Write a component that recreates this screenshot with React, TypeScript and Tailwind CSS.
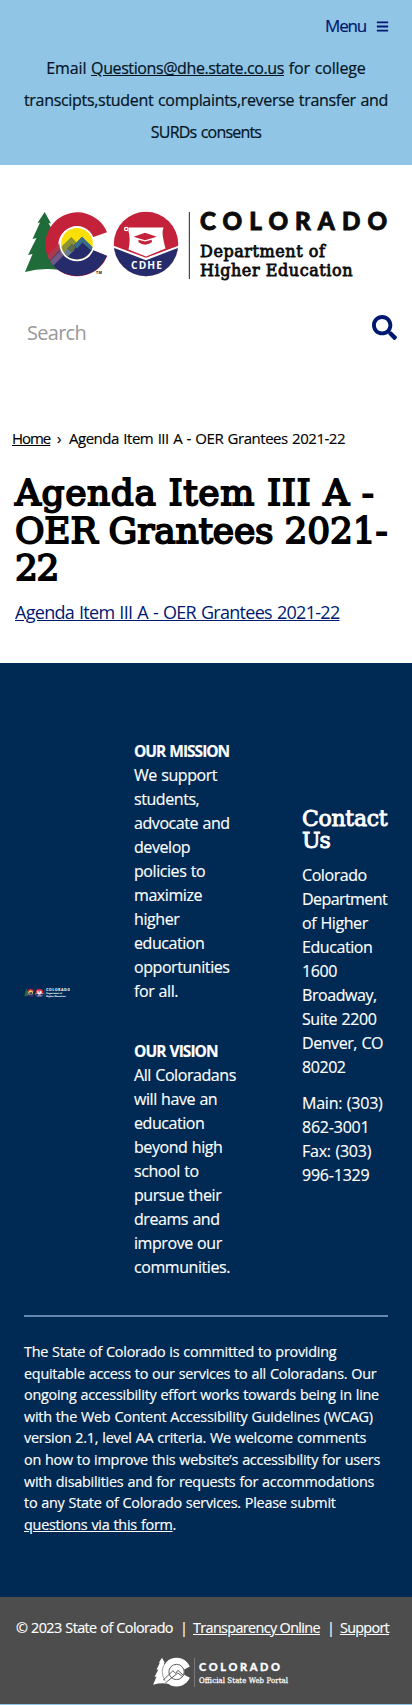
import { FaBars, FaSearch } from "react-icons/fa";

const TREE =
  "M44.7 212L51 223.5L48.5 223L56 237L52.5 236.5L60 270Q42 267 25 272L32.5 254L28 255L36.5 238L32.5 239L40 222.5L37.5 223Z";
const BIG_C =
  "M107 232.2A32 32 0 1 0 107.2 256L92.5 250A17.5 17.5 0 1 1 92 237.6Z";

function HigherEdLogo({ light = false, className }: { light?: boolean; className: string }) {
  const ink = light ? "#ffffff" : "#0b0b0b";
  return (
    <svg viewBox="24 210 364 72" className={className} role="img" aria-label="Colorado Department of Higher Education">
      <defs>
        <clipPath id="cdhe-c">
          <circle cx="77" cy="244" r="32" />
        </clipPath>
        <clipPath id="cdhe-o">
          <circle cx="146" cy="244" r="32.2" />
        </clipPath>
        <clipPath id="cdhe-sun">
          <circle cx="77" cy="243.7" r="15.8" />
        </clipPath>
      </defs>
      <path d={TREE} fill="#1f6b3a" />
      <path d={BIG_C} fill="#c4213a" />
      <g clipPath="url(#cdhe-c)">
        <path d="M46.5 263L64 245.5L77 261L92.5 250L108 256.2V277H58Z" fill="#252b6b" />
        <path d="M46 257L60 243L62 248L49.5 261Z" fill="#a8394f" />
        <path d="M49 262L63.5 247.5L66 253L53 266Z" fill="#6f5a86" />
      </g>
      <circle cx="77" cy="243.7" r="17.6" fill="#ffffff" />
      <circle cx="77" cy="243.7" r="15.8" fill="#fbdf08" />
      <g clipPath="url(#cdhe-sun)">
        <path d="M58 250L71.3 237L80 246L70 262H58Z" fill="#8e9233" />
        <path d="M58 262L82 237L96 251V264H58Z" fill="#252b6b" />
        <path d="M74 245L82 236.8L96 250.5V255L82.5 242.5L77 248.5Z" fill="#3a6f8c" />
        <path d="M60 256L70 246L74.5 250L64 260Z" fill="#6c7d93" />
        <path d="M67 248.5L72 243.5L76 247.5L71.5 252.5Z" fill="#5a6d4d" />
      </g>
      {!light && (
        <text x="96" y="274" fill={ink} className="font-['Open_Sans',sans-serif] font-bold" fontSize="3.6" textLength="6">
          TM
        </text>
      )}

      <circle cx="146" cy="244" r="32.2" fill="#c4213a" />
      <g clipPath="url(#cdhe-o)">
        <path d="M113 245.5L146 257.8L179 245.5V278H113Z" fill="#ffffff" />
        <path d="M113 247.5L146 260.2L179 247.5V278H113Z" fill="#252b6b" />
      </g>
      <path
        d="M128.5 227.5H163.5C161.5 233 163 239 165.5 248.5L146 256.5L128.5 249.5C130 243 130 236 128.5 231.5Z"
        fill="#ffffff"
      />
      <circle cx="126.2" cy="229" r="1.7" fill="none" stroke="#ffffff" strokeWidth="1.3" />
      <path d="M133.5 236.8L145 232.8L156.8 236.8L145 240.2Z" fill="#c4213a" />
      <path d="M138.5 239.7L145 241.4L151.8 239.7V242.3Q145 247 138.5 242.3Z" fill="#c4213a" />
      <text
        x="131"
        y="269"
        fill="#ffffff"
        className="font-['Open_Sans',sans-serif] font-bold"
        fontSize="10.2"
        textLength="31"
      >
        CDHE
      </text>

      <path d="M189.4 212V279" stroke={light ? "#ffffff" : "#4a4a4a"} strokeWidth="1.2" />
      <text
        x="200"
        y="230"
        fill={ink}
        stroke={ink}
        strokeWidth=".9"
        className="font-['Lato',sans-serif] font-black"
        fontSize="24.2"
        textLength="187"
      >
        COLORADO
      </text>
      <g
        fill={ink}
        stroke={ink}
        strokeWidth=".8"
        className="font-['DejaVu_Serif',serif]"
        fontSize="16"
      >
        <text x="200" y="256.8" textLength="125">
          Department of
        </text>
        <text x="200" y="275.8" textLength="152.5">
          Higher Education
        </text>
      </g>
    </svg>
  );
}

function StatePortalLogo() {
  return (
    <svg viewBox="152 1656 138 34" className="ml-[152px] block h-[34px] w-[138px]" role="img" aria-label="Colorado Official State Web Portal">
      <g transform="translate(141.9 1562.3) scale(.45)">
        <path d={TREE} fill="#ffffff" />
        <circle cx="77" cy="244" r="32" fill="#ffffff" />
        <path d="M94 238L110 230V258L94 250Z" fill="#4d4d4d" />
        <path d="M53 222Q38 241 52 264" fill="none" stroke="#4d4d4d" strokeWidth="1.2" />
        <circle cx="77" cy="243.7" r="17" fill="#ffffff" stroke="#4d4d4d" strokeWidth="2" />
        <path d="M47 262L69 241L75 247L80 240L92 251M52 268L80 246L90 254" fill="none" stroke="#4d4d4d" strokeWidth="2" />
      </g>
      <path d="M194.5 1658V1687" stroke="#7a7a7a" strokeWidth="1" />
      <text
        x="199"
        y="1671"
        fill="#ffffff"
        stroke="#ffffff"
        strokeWidth=".3"
        className="font-['Lato',sans-serif] font-black"
        fontSize="11"
        textLength="81"
      >
        COLORADO
      </text>
      <text
        x="199"
        y="1683"
        fill="#ffffff"
        stroke="#ffffff"
        strokeWidth=".25"
        className="font-['DejaVu_Serif',serif] font-stretch-condensed"
        fontSize="7.7"
        textLength="89"
      >
        Official State Web Portal
      </text>
    </svg>
  );
}

export default function App() {
  return (
    <div className="flex min-h-[1705px] w-[412px] flex-col bg-white font-['Open_Sans',sans-serif] text-base text-black">
      <header className="h-[165px] bg-[#90c5e6]">
        <div className="flex h-[52px] items-center justify-end pr-[23px] text-[#001970]">
          <a className="text-[17px] tracking-[-1.2px] [-webkit-text-stroke:0.2px]">Menu</a>
          <FaBars className="ml-[10px] size-[13px]" />
        </div>
        <p className="text-center leading-8 text-[#04141f] [-webkit-text-stroke:0.2px]">
          <span className="tracking-[-0.15px] [word-spacing:0.8px]">
            Email <a className="tracking-[-0.4px] underline">Questions@dhe.state.co.us</a> for college
          </span>
          <br />
          <span className="tracking-[-0.31px] [word-spacing:0.8px]">
            transcipts,student complaints,reverse transfer and
          </span>
          <br />
          <span className="tracking-[-0.8px] [word-spacing:1px]">SURDs consents</span>
        </p>
      </header>

      <div className="pt-[45px]">
        <HigherEdLogo className="ml-6 block h-[72px] w-[364px] overflow-visible" />
      </div>

      <form className="mt-[33px] flex h-[25px] items-start justify-between pr-[15px] pl-[27px]">
        <span className="pt-[4px] text-xl tracking-[-0.72px] text-[#999]">Search</span>
        <FaSearch className="size-[25px] text-[#001970]" />
      </form>

      <nav className="mt-[87px] flex pl-3 text-[15px] leading-[22px] [-webkit-text-stroke:0.15px]">
        <a className="w-[39px] tracking-[-1.05px] underline">Home</a>
        <span className="w-[18px] pl-[6px]">›</span>
        <span className="tracking-[-0.48px] [word-spacing:1px]">Agenda Item III A - OER Grantees 2021-22</span>
      </nav>

      <main className="mt-[25px] px-[15px]">
        <h1 className="font-['DejaVu_Serif',serif] text-[36px] leading-[37.6px] [-webkit-text-stroke:1.8px_black]">
          <span className="tracking-[0.57px]">Agenda Item III A - </span>
          <br />
          <span className="tracking-[-0.18px]">OER Grantees 2021-</span>
          <br />
          <span className="tracking-[-1.4px]">22</span>
        </h1>
        <p className="mt-[12px] text-lg leading-[27px] tracking-[-0.71px] text-[#001970] [word-spacing:1px]">
          <a className="underline">Agenda Item III A - OER Grantees 2021-22</a>
        </p>
      </main>

      <footer className="mt-auto">
        <section className="h-[934px] bg-[#002a54] px-6 pt-[76px] text-white [-webkit-text-stroke:0.15px]">
          <div className="flex h-[540px] items-start">
            <div className="flex h-[508px] w-[110px] items-center">
              <HigherEdLogo light className="h-[10px] w-[46px]" />
            </div>
            <div className="w-[168px] leading-6 tracking-[-0.43px] [word-spacing:0.6px]">
              <p>
                <strong className="text-[15.5px] leading-[23px] tracking-[-1px] [word-spacing:1px]">OUR MISSION</strong>
                <br />
                We support
                <br />
                students,
                <br />
                advocate and
                <br />
                develop
                <br />
                policies to
                <br />
                maximize
                <br />
                higher
                <br />
                education
                <br />
                opportunities
                <br />
                for all.
              </p>
              <p className="mt-9">
                <strong className="text-[15.5px] leading-[23px] tracking-[-0.95px] [word-spacing:1px]">OUR VISION</strong>
                <br />
                All Coloradans
                <br />
                will have an
                <br />
                education
                <br />
                beyond high
                <br />
                school to
                <br />
                pursue their
                <br />
                dreams and
                <br />
                improve our
                <br />
                communities.
              </p>
            </div>
            <div className="pt-[69px] leading-6 tracking-[-0.43px] [word-spacing:0.6px]">
              <h2 className="font-['DejaVu_Serif',serif] text-[22px] leading-[22px] [-webkit-text-stroke:0.9px_white]">
                <span className="tracking-[-0.3px]">Contact</span>
                <br />
                <span className="tracking-[-1px]">Us</span>
              </h2>
              <p className="mt-[11px]">
                Colorado
                <br />
                <span className="tracking-[-0.58px]">Department</span>
                <br />
                of Higher
                <br />
                Education
                <br />
                1600
                <br />
                Broadway,
                <br />
                Suite 2200
                <br />
                Denver, CO
                <br />
                80202
              </p>
              <p className="mt-3 tracking-[-0.22px]">
                Main: (303)
                <br />
                862-3001
                <br />
                Fax: (303)
                <br />
                996-1329
              </p>
            </div>
          </div>
          <hr className="mt-[36px] h-[2px] border-0 bg-[#6487b0]" />
          <p className="mt-[24px] text-[14.4px] leading-[21.6px] tracking-[-0.25px] whitespace-nowrap [word-spacing:0.5px]">
            The State of Colorado is committed to providing
            <br />
            equitable access to our services to all Coloradans. Our
            <br />
            ongoing accessibility effort works towards being in line
            <br />
            with the Web Content Accessibility Guidelines (WCAG)
            <br />
            version 2.1, level AA criteria. We welcome comments
            <br />
            on how to improve this website’s accessibility for users
            <br />
            with disabilities and for requests for accommodations
            <br />
            to any State of Colorado services. Please submit
            <br />
            <a className="underline">questions via this form</a>.
          </p>
        </section>
        <section className="h-[107px] bg-[#4d4d4d] pt-[20px] text-white">
          <p className="flex pl-4 text-[14.4px] leading-[22px] whitespace-nowrap [-webkit-text-stroke:0.15px]">
            <span className="w-[164px] tracking-[-0.6px] [word-spacing:0.6px]">© 2023 State of Colorado</span>
            <span className="w-[13px]">|</span>
            <a className="tracking-[-0.64px] underline">Transparency Online</a>
            <span className="w-[20px] pl-[7px]">|</span>
            <a className="tracking-[-0.71px] underline">Support</a>
          </p>
          <div className="mt-[17px]">
            <StatePortalLogo />
          </div>
        </section>
        <div className="h-px bg-[#90c5e6]" />
      </footer>
    </div>
  );
}
